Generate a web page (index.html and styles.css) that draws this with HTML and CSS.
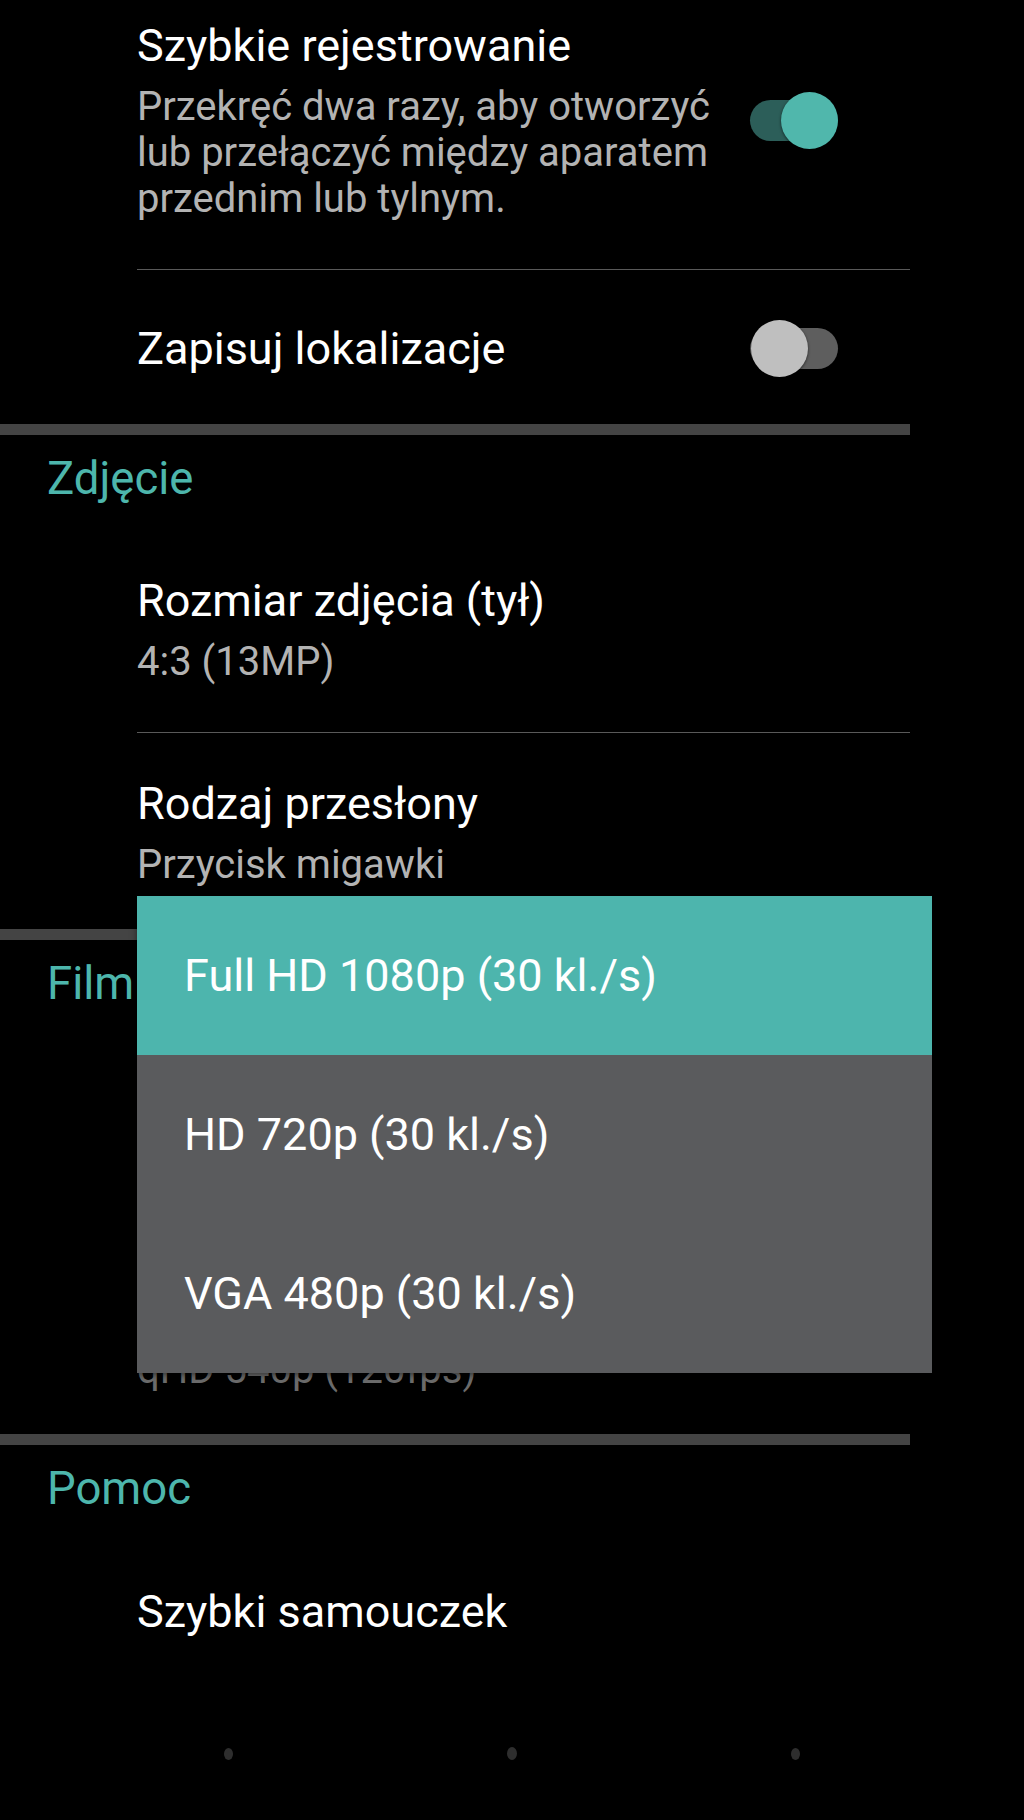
FILE: index.html
```html
<!DOCTYPE html>
<html lang="pl">
<head>
<meta charset="utf-8">
<title>Ustawienia aparatu</title>
<link rel="stylesheet" href="styles.css">
</head>
<body>
<div class="screen">
  <div class="list">
    <div class="pref two">
      <div class="text">
        <div class="title">Szybkie rejestrowanie</div>
        <div class="summary">Przekręć dwa razy, aby otworzyć lub przełączyć między aparatem przednim lub tylnym.</div>
      </div>
      <div class="switch on"><span class="track"></span><span class="thumb"></span></div>
    </div>
    <div class="divider"></div>
    <div class="pref one">
      <div class="text">
        <div class="title">Zapisuj lokalizacje</div>
      </div>
      <div class="switch off"><span class="track"></span><span class="thumb"></span></div>
    </div>
    <div class="bar"></div>

    <div class="category">Zdjęcie</div>
    <div class="group">
      <div class="pref two">
        <div class="text">
          <div class="title">Rozmiar zdjęcia (tył)</div>
          <div class="summary">4:3 (13MP)</div>
        </div>
      </div>
      <div class="divider"></div>
      <div class="pref two">
        <div class="text">
          <div class="title">Rodzaj przesłony</div>
          <div class="summary">Przycisk migawki</div>
        </div>
      </div>
    </div>
    <div class="bar"></div>

    <div class="category">Film</div>
    <div class="group">
      <div class="pref two">
        <div class="text">
          <div class="title">Jakość filmu (tył)</div>
          <div class="summary">Full HD 1080p (30 kl./s)</div>
        </div>
      </div>
      <div class="divider"></div>
      <div class="pref two">
        <div class="text">
          <div class="title dim">Film w zwolnionym tempie</div>
          <div class="summary dim">qHD 540p (120fps)</div>
        </div>
      </div>
    </div>
    <div class="bar"></div>

    <div class="category">Pomoc</div>
    <div class="pref one">
      <div class="text">
        <div class="title">Szybki samouczek</div>
      </div>
    </div>
  </div>

  <div class="nav">
    <span class="dot"></span>
    <span class="dot big"></span>
    <span class="dot"></span>
  </div>

  <div class="dropdown">
    <div class="option selected">Full HD 1080p (30 kl./s)</div>
    <div class="option">HD 720p (30 kl./s)</div>
    <div class="option">VGA 480p (30 kl./s)</div>
  </div>
</div>
</body>
</html>
```

FILE: styles.css
```css
* {
  box-sizing: border-box;
}

html, body {
  margin: 0;
  padding: 0;
  background: #000;
}

body {
  font-family: Roboto, "Noto Sans", "Liberation Sans", sans-serif;
  color: #fff;
}

.screen {
  position: relative;
  width: 1024px;
  height: 1820px;
  overflow: hidden;
  background: #000;
}

.list {
  width: 910px;
  margin-top: -25px;
}

.pref {
  display: flex;
  align-items: center;
  padding-left: 137px;
}

.pref.two {
  padding-top: 43px;
  padding-bottom: 47px;
}

.group .pref.two:last-child {
  padding-bottom: 41px;
}

.pref.one {
  padding-top: 50px;
  padding-bottom: 47px;
}

.category + .pref.one {
  padding-top: 44px;
}

.text {
  flex: 1;
  min-width: 0;
  padding-right: 20px;
}

.title {
  font-size: 45px;
  line-height: 56px;
  color: #fff;
  white-space: nowrap;
}

.summary {
  margin-top: 10px;
  font-size: 40px;
  line-height: 46px;
  color: #b3b3b3;
}

.dim {
  color: #6b6b6b;
}

.divider {
  height: 1px;
  margin-left: 137px;
  background: #595959;
}

.bar {
  height: 11px;
  background: #444;
}

.category {
  height: 95px;
  padding-left: 47px;
  padding-top: 16px;
  font-size: 45.5px;
  line-height: 56px;
  color: #4db6ac;
}

/* switches */
.switch {
  position: relative;
  flex: none;
  width: 88px;
  height: 57px;
  margin-right: 72px;
}

.switch .track {
  position: absolute;
  left: 0;
  top: 8px;
  width: 88px;
  height: 41px;
  border-radius: 21px;
}

.switch .thumb {
  position: absolute;
  top: 0;
  width: 57px;
  height: 57px;
  border-radius: 50%;
  box-shadow: 0 1px 3px rgba(0, 0, 0, 0.6);
}

.switch.on .track {
  background: #2c5e59;
}

.switch.on .thumb {
  left: 31px;
  background: #50b7ac;
}

.switch.off .track {
  background: #5e5e5e;
}

.switch.off .thumb {
  left: 1px;
  background: #bfbfbf;
}

/* bottom nav dots */
.nav {
  display: flex;
  justify-content: center;
  align-items: center;
  gap: 274px;
  margin-top: 60px;
}

.dot {
  width: 9px;
  height: 12px;
  border-radius: 50%;
  background: #2e2e2e;
}

.dot.big {
  width: 10px;
  height: 13px;
}

/* spinner dropdown overlay */
.dropdown {
  position: absolute;
  left: 137px;
  top: 896px;
  width: 795px;
  display: flex;
  flex-direction: column;
  background: #5a5b5d;
  box-shadow: 0 2px 6px rgba(0, 0, 0, 0.5);
}

.option {
  display: flex;
  align-items: center;
  height: 159px;
  padding-left: 47px;
  font-size: 45px;
  line-height: 56px;
  color: #fff;
}

.option.selected {
  background: #4db5ad;
}
```
